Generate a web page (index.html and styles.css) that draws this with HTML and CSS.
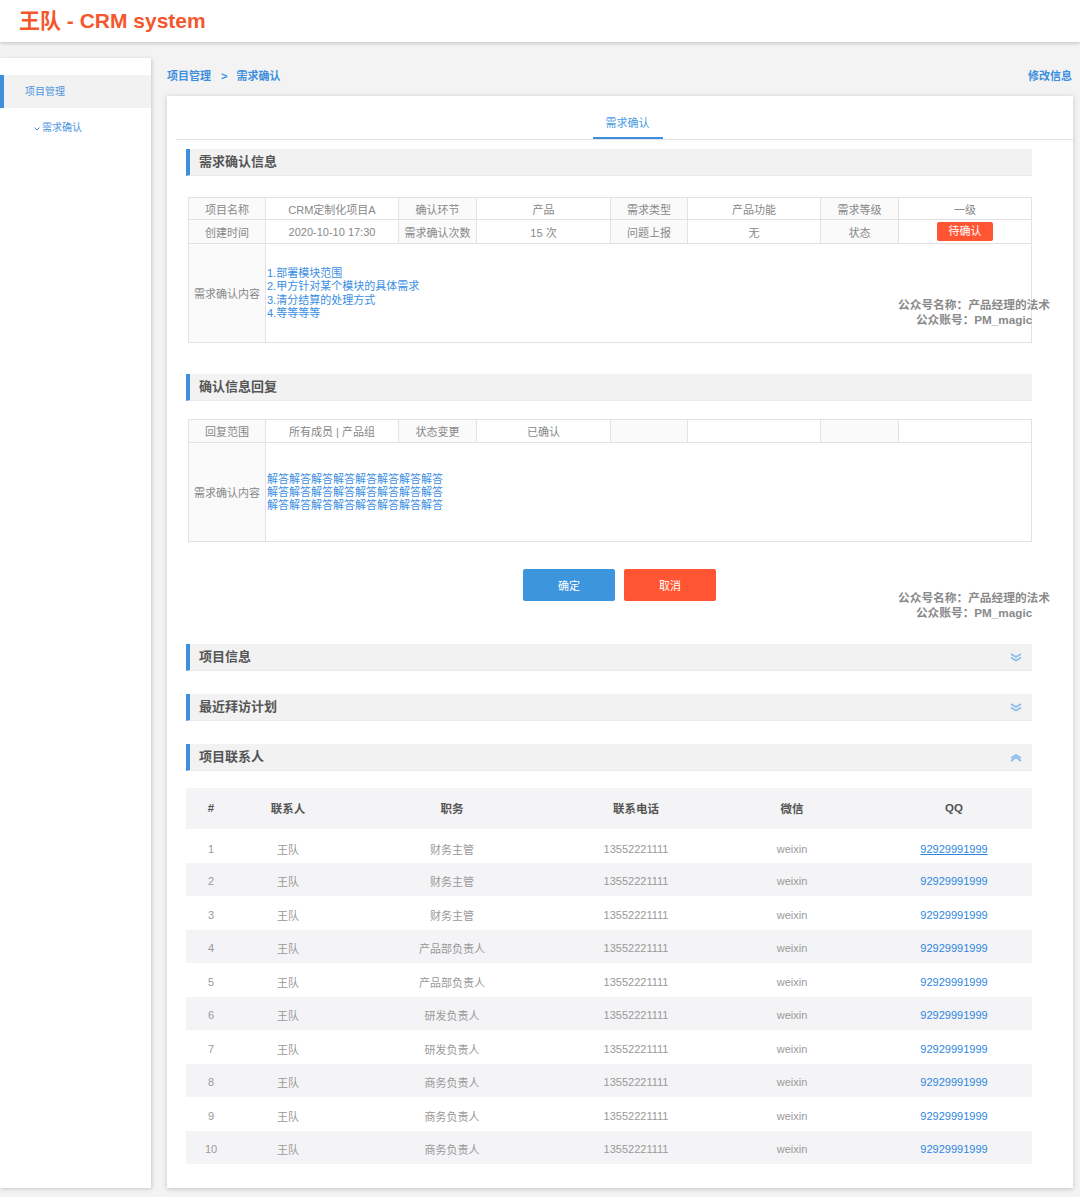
FILE: index.html
```html
<!DOCTYPE html>
<html lang="zh-CN">
<head>
<meta charset="utf-8">
<title>王队 - CRM system</title>
<link rel="stylesheet" href="styles.css">
</head>
<body>
<header class="topbar">
  <h1 class="brand">王队 - CRM system</h1>
</header>
<div class="layout">
  <aside class="sidebar">
    <div class="nav-item active">项目管理</div>
    <div class="nav-sub">
      <svg class="sub-caret" width="6" height="4" viewBox="0 0 6 4"><polyline points="0.5,0.5 3,3 5.5,0.5" fill="none" stroke="#4a95de" stroke-width="1"/></svg>
      <span>需求确认</span>
    </div>
  </aside>
  <main class="main">
    <div class="crumbs">
      <div class="crumb-path"><span>项目管理</span><span class="crumb-sep">&gt;</span><span>需求确认</span></div>
      <a class="crumb-action">修改信息</a>
    </div>
    <section class="card">
      <div class="tabbar"><div class="tab active">需求确认</div></div>
      <div class="card-body">
        <div class="sec-head sec-first"><span>需求确认信息</span></div>
        <table class="info info-1">
          <colgroup><col style="width:77px"><col style="width:133px"><col style="width:78px"><col style="width:134px"><col style="width:77px"><col style="width:133px"><col style="width:78px"><col style="width:133px"></colgroup>
          <tr class="r23">
            <td class="lbl">项目名称</td><td>CRM定制化项目A</td><td class="lbl">确认环节</td><td>产品</td>
            <td class="lbl">需求类型</td><td>产品功能</td><td class="lbl">需求等级</td><td>一级</td>
          </tr>
          <tr class="r24">
            <td class="lbl">创建时间</td><td>2020-10-10 17:30</td><td class="lbl">需求确认次数</td><td>15 次</td>
            <td class="lbl">问题上报</td><td>无</td><td class="lbl">状态</td><td><span class="badge">待确认</span></td>
          </tr>
          <tr class="r99">
            <td class="lbl">需求确认内容</td>
            <td colspan="7" class="content">1.部署模块范围<br>2.甲方针对某个模块的具体需求<br>3.清分结算的处理方式<br>4.等等等等</td>
          </tr>
        </table>

        <div class="sec-head sec-second"><span>确认信息回复</span></div>
        <table class="info info-2">
          <colgroup><col style="width:77px"><col style="width:133px"><col style="width:78px"><col style="width:134px"><col style="width:77px"><col style="width:133px"><col style="width:78px"><col style="width:133px"></colgroup>
          <tr class="r24b">
            <td class="lbl">回复范围</td><td>所有成员 | 产品组</td><td class="lbl">状态变更</td><td>已确认</td>
            <td class="lbl"></td><td></td><td class="lbl"></td><td></td>
          </tr>
          <tr class="r99">
            <td class="lbl">需求确认内容</td>
            <td colspan="7" class="content">解答解答解答解答解答解答解答解答<br>解答解答解答解答解答解答解答解答<br>解答解答解答解答解答解答解答解答</td>
          </tr>
        </table>

        <div class="actions">
          <button class="btn btn-ok">确定</button>
          <button class="btn btn-cancel">取消</button>
        </div>

        <div class="sec-head sec-collapsed sec-a"><span>项目信息</span>
          <svg class="chev" width="12" height="9" viewBox="0 0 12 9"><polyline points="1,1 6,4 11,1" fill="none" stroke="#8cbdec" stroke-width="1.8"/><polyline points="1,4.5 6,7.5 11,4.5" fill="none" stroke="#8cbdec" stroke-width="1.8"/></svg>
        </div>
        <div class="sec-head sec-collapsed"><span>最近拜访计划</span>
          <svg class="chev" width="12" height="9" viewBox="0 0 12 9"><polyline points="1,1 6,4 11,1" fill="none" stroke="#8cbdec" stroke-width="1.8"/><polyline points="1,4.5 6,7.5 11,4.5" fill="none" stroke="#8cbdec" stroke-width="1.8"/></svg>
        </div>
        <div class="sec-head sec-collapsed"><span>项目联系人</span>
          <svg class="chev" width="12" height="9" viewBox="0 0 12 9"><polyline points="1,8 6,4 11,8" fill="none" stroke="#8cbdec" stroke-width="1.8"/><polyline points="1,5 6,2 11,5" fill="none" stroke="#8cbdec" stroke-width="1.6"/></svg>
        </div>

        <table class="contacts">
          <colgroup><col style="width:50px"><col style="width:104px"><col style="width:224px"><col style="width:144px"><col style="width:168px"><col style="width:156px"></colgroup>
          <thead><tr><th>#</th><th>联系人</th><th>职务</th><th>联系电话</th><th>微信</th><th>QQ</th></tr></thead>
          <tbody>
            <tr><td>1</td><td>王队</td><td>财务主管</td><td>13552221111</td><td>weixin</td><td><a class="qq underline">92929991999</a></td></tr>
            <tr><td>2</td><td>王队</td><td>财务主管</td><td>13552221111</td><td>weixin</td><td><a class="qq">92929991999</a></td></tr>
            <tr><td>3</td><td>王队</td><td>财务主管</td><td>13552221111</td><td>weixin</td><td><a class="qq">92929991999</a></td></tr>
            <tr><td>4</td><td>王队</td><td>产品部负责人</td><td>13552221111</td><td>weixin</td><td><a class="qq">92929991999</a></td></tr>
            <tr><td>5</td><td>王队</td><td>产品部负责人</td><td>13552221111</td><td>weixin</td><td><a class="qq">92929991999</a></td></tr>
            <tr><td>6</td><td>王队</td><td>研发负责人</td><td>13552221111</td><td>weixin</td><td><a class="qq">92929991999</a></td></tr>
            <tr><td>7</td><td>王队</td><td>研发负责人</td><td>13552221111</td><td>weixin</td><td><a class="qq">92929991999</a></td></tr>
            <tr><td>8</td><td>王队</td><td>商务负责人</td><td>13552221111</td><td>weixin</td><td><a class="qq">92929991999</a></td></tr>
            <tr><td>9</td><td>王队</td><td>商务负责人</td><td>13552221111</td><td>weixin</td><td><a class="qq">92929991999</a></td></tr>
            <tr><td>10</td><td>王队</td><td>商务负责人</td><td>13552221111</td><td>weixin</td><td><a class="qq">92929991999</a></td></tr>
          </tbody>
        </table>
      </div>
      <div class="watermark wm-1">公众号名称：产品经理的法术<br>公众账号：PM_magic</div>
      <div class="watermark wm-2">公众号名称：产品经理的法术<br>公众账号：PM_magic</div>
    </section>
  </main>
</div>
</body>
</html>
```
FILE: styles.css
```css
* { box-sizing: border-box; }
html, body { margin: 0; padding: 0; }
body {
  background: #f3f3f3;
  font-family: "Liberation Sans", "Noto Sans CJK SC", sans-serif;
  font-size: 11px;
  color: #888;
  width: 1080px;
}
.topbar {
  height: 42px;
  background: #fff;
  box-shadow: 0 1px 4px rgba(0,0,0,0.22);
  padding-left: 19px;
  position: relative;
  z-index: 2;
}
.brand {
  margin: 0;
  font-size: 21px;
  line-height: 42px;
  font-weight: bold;
  color: #f5572d;
  letter-spacing: 0;
}
.layout {
  display: flex;
  padding-top: 16px;
  padding-bottom: 9px;
}
.sidebar {
  width: 151px;
  flex: none;
  background: #fff;
  box-shadow: 1px 1px 4px rgba(0,0,0,0.18);
  padding-top: 17px;
}
.nav-item {
  height: 33px;
  line-height: 34px;
  padding-left: 21px;
  border-left: 4px solid #3c8fdd;
  background: #f2f2f2;
  color: #4a95de;
  font-size: 10px;
}
.nav-sub {
  display: flex;
  align-items: center;
  gap: 2px;
  padding-left: 34px;
  margin-top: 12px;
  color: #4a95de;
  font-size: 10px;
  line-height: 16px;
}
.sub-caret { margin-top: 2px; }
.main {
  flex: 1;
  padding-left: 16px;
  padding-right: 7px;
}
.crumbs {
  height: 38px;
  display: flex;
  justify-content: space-between;
  align-items: flex-start;
  padding-top: 11px;
  font-weight: bold;
  color: #3c8fdd;
  font-size: 11px;
  line-height: 14px;
}
.crumb-sep { margin: 0 9px 0 10px; }
.crumb-action { color: #3c8fdd; margin-right: 1px; }
.card {
  position: relative;
  background: #fff;
  box-shadow: 0 1px 5px rgba(0,0,0,0.2);
  padding: 0 0 24px 9px;
}
.tabbar {
  height: 44px;
  border-bottom: 1px solid #e4e4e4;
  display: flex;
  justify-content: center;
}
.tab {
  width: 70px;
  height: 43px;
  padding-top: 20px;
  text-align: center;
  color: #4a9be3;
  font-size: 11px;
  line-height: 14px;
  border-bottom: 2px solid #3c8fdd;
  margin-left: 6px;
}
.card-body { padding: 0 41px 0 10px; }
.sec-head {
  height: 27px;
  display: flex;
  align-items: center;
  justify-content: space-between;
  background: #f2f2f2;
  border-left: 4px solid #3c8fdd;
  border-bottom: 1px solid #ebebeb;
  padding: 0 10px 3px 9px;
  font-size: 13px;
  font-weight: bold;
  color: #555;
}
.sec-head .chev { margin-top: 4px; }
.sec-first { margin-top: 9px; }
.sec-second { margin-top: 31px; }
.sec-collapsed { margin-top: 23px; }
.sec-a { margin-top: 43px; }
table { border-collapse: collapse; table-layout: fixed; }
.info {
  width: 843px;
  margin-left: 2px;
}
.info-1 { margin-top: 21px; }
.info-2 { margin-top: 18px; }
.info td {
  border: 1px solid #e2e2e2;
  text-align: center;
  vertical-align: middle;
  color: #888;
  font-size: 11px;
  padding: 0;
  white-space: nowrap;
}
.info td.lbl { background: #fafafa; }
.info .r23 { height: 22px; }
.info .r24 { height: 24px; }
.info .r24b { height: 23px; }
.info .r99 { height: 99px; }
.info td.content {
  text-align: left;
  color: #3a8ee2;
  line-height: 13.3px;
  padding-left: 1px;
  padding-top: 1px;
}
.badge {
  display: inline-block;
  width: 56px;
  height: 19px;
  line-height: 19px;
  background: #ff5533;
  color: #fff;
  border-radius: 2px;
  font-size: 11px;
}
.actions {
  display: flex;
  gap: 9px;
  margin-top: 27px;
  padding-left: 337px;
}
.btn {
  width: 92px;
  height: 32px;
  border: none;
  border-radius: 2px;
  color: #fff;
  font-family: inherit;
  font-size: 11px;
  padding: 0;
}
.btn-ok { background: #3d95de; }
.btn-cancel { background: #ff5533; }
.contacts {
  width: 846px;
  margin-top: 17px;
}
.contacts th {
  height: 41px;
  background: #f4f4f6;
  color: #555;
  font-weight: bold;
  font-size: 11.5px;
  text-align: center;
  padding: 0 0 2px 0;
}
.contacts td {
  height: 33.5px;
  text-align: center;
  color: #999;
  font-size: 11px;
  padding: 4px 0 0 0;
}
.contacts tbody tr:first-child td { padding-top: 6px; }
.contacts tbody tr:nth-child(even) td { background: #f4f4f6; }
.qq { color: #2d86e0; }
.qq.underline { text-decoration: underline; }
.watermark {
  position: absolute;
  right: 23px;
  text-align: center;
  font-size: 11.7px;
  line-height: 15px;
  font-weight: bold;
  color: #8a8a8a;
}
.wm-1 { top: 201px; }
.wm-2 { top: 494px; }
```
